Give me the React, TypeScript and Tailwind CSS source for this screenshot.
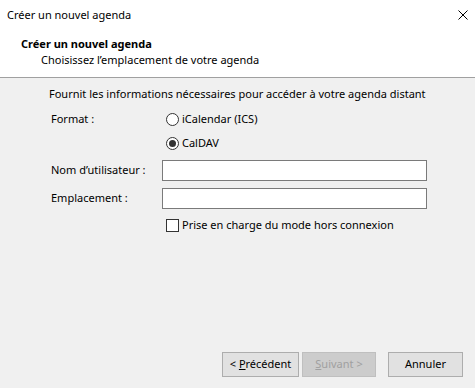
import React from "react";

function Radio({ checked, label }: { checked?: boolean; label: string }) {
  return (
    <div className="flex items-center h-[24px]">
      <span className="w-[13px] h-[13px] rounded-full border border-[#333333] bg-white flex items-center justify-center ml-[4px]">
        {checked && <span className="w-[7px] h-[7px] rounded-full bg-[#333333]" />}
      </span>
      <span className="ml-[3px]">{label}</span>
    </div>
  );
}

export default function App() {
  return (
    <div
      className="w-[475px] h-[388px] bg-[#f0f0f0] flex flex-col text-[11px] text-black overflow-hidden"
      style={{ fontFamily: '"Segoe UI", "Noto Sans", "Open Sans", sans-serif' }}
    >
      <div className="h-[78px] bg-white border-b border-[#a0a0a0] flex flex-col">
        <div className="h-[30px] flex items-center justify-between pl-[7px] pr-[7px]">
          <span>Créer un nouvel agenda</span>
          <svg width="10" height="10" viewBox="0 0 10 10">
            <path d="M0.5 0.5 L9.5 9.5 M9.5 0.5 L0.5 9.5" stroke="#000" strokeWidth="1" />
          </svg>
        </div>
        <div className="pl-[21px] mt-[6px] font-bold leading-[16px]">Créer un nouvel agenda</div>
        <div className="pl-[41px] leading-[16px]">Choisissez l’emplacement de votre agenda</div>
      </div>

      <div className="flex-1 flex flex-col pl-[49px] pt-[8px]">
        <div className="leading-[16px]">Fournit les informations nécessaires pour accéder à votre agenda distant</div>

        <div className="grid grid-cols-[113px_265px] mt-[5px] items-center">
          <div className="pl-[2px] h-[24px] flex items-center">Format :</div>
          <Radio label="iCalendar (ICS)" />
          <div />
          <Radio checked label="CalDAV" />

          <div className="pl-[2px] mt-[5px] h-[21px] flex items-center">Nom d’utilisateur :</div>
          <div className="mt-[5px] h-[21px] border border-[#7a7a7a] bg-white" />

          <div className="pl-[2px] mt-[7px] h-[21px] flex items-center">Emplacement :</div>
          <div className="mt-[7px] h-[21px] border border-[#7a7a7a] bg-white" />

          <div />
          <div className="mt-[8px] h-[16px] flex items-center">
            <span className="w-[13px] h-[13px] border border-[#333333] bg-white ml-[4px]" />
            <span className="ml-[3px]">Prise en charge du mode hors connexion</span>
          </div>
        </div>

        <div className="flex-1" />

        <div className="flex justify-end pr-[12px] pb-[11px]">
          <button className="w-[77px] h-[25px] bg-[#e1e1e1] border border-[#adadad] flex items-center justify-center">
            &lt;&nbsp;<span className="underline">P</span>récédent
          </button>
          <button className="ml-[3px] w-[74px] h-[25px] bg-[#cccccc] border border-[#bfbfbf] text-[#a0a0a0] flex items-center justify-center">
            <span className="underline">S</span>uivant &gt;
          </button>
          <button className="ml-[12px] w-[75px] h-[25px] bg-[#e1e1e1] border border-[#adadad] flex items-center justify-center">
            Annuler
          </button>
        </div>
      </div>
    </div>
  );
}
